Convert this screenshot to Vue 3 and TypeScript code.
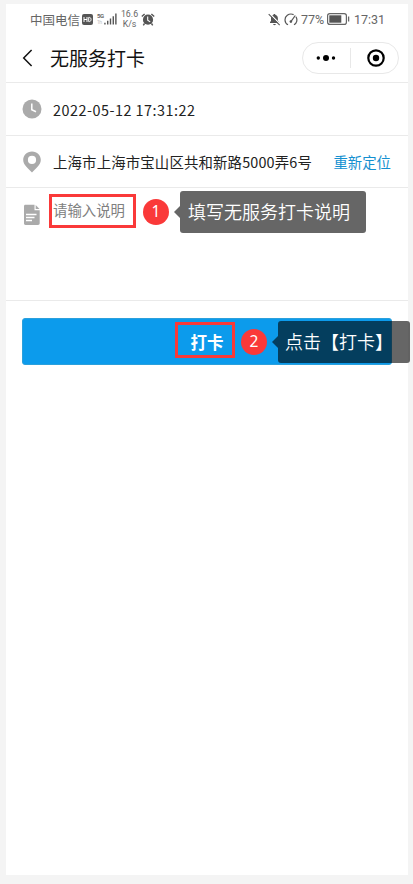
<script setup lang="ts">
interface Note {
  id: number
  text: string
}

const carrier = '中国电信'
const clock = '17:31'
const title = '无服务打卡'
const checkTime = '2022-05-12 17:31:22'
const address = '上海市上海市宝山区共和新路5000弄6号'
const notes: Note[] = [
  { id: 1, text: '填写无服务打卡说明' },
  { id: 2, text: '点击【打卡】' },
]
</script>

<template>
  <div class="page">
    <main class="phone">
      <div class="status">
        <span class="carrier">{{ carrier }}</span>
        <svg class="hd" width="11" height="11" viewBox="0 0 11 11">
          <rect width="11" height="11" rx="2" fill="#555" />
          <path d="M2 3v5M5 3v5M2 5.5h3M6.7 3.4v4.2h.7c2.2 0 2.2-4.2 0-4.2z" fill="none" stroke="#fff" stroke-width="1" />
        </svg>
        <span class="net"><b>5G</b><i>1h</i></span>
        <svg class="bars" width="13" height="12" viewBox="0 0 14 12">
          <path d="M1 10v2M4 8v4M7 5.500v6.500M10 3v9M12.800 0v12" stroke="#555" stroke-width="1.500" />
        </svg>
        <span class="speed"><span>16.6</span><span>K/s</span></span>
        <svg class="alarm" width="14" height="13" viewBox="0 0 14 13">
          <circle cx="7" cy="6.700" r="5.100" fill="#555" />
          <path d="M.8 3.600L3.600 1M13.200 3.600L10.400 1M3.500 10.500L2.300 12.300M10.500 10.500l1.200 1.800" stroke="#555" stroke-width="1.400" />
          <path d="M6.700 3.500v3.700l2.500 1.700" fill="none" stroke="#fff" stroke-width="1.100" />
        </svg>
        <div class="status-right">
          <svg width="13" height="13" viewBox="0 0 13 13">
            <path d="M2 10V9l1-1V5.500C3 3.300 4.200 2.200 5.600 1.800V1h1.600v.8C8.800 2.200 9.900 3.500 9.900 5.500V8l1.200 1v1z" fill="#555" />
            <path d="M5 11h3c-.4 1.500-2.600 1.500-3 0z" fill="#555" />
            <path d="M1.500.5l11 11" stroke="#fff" stroke-width="1.200" />
            <path d="M.7 1.200l11 11" stroke="#555" stroke-width="1.100" />
          </svg>
          <svg class="gauge" width="14" height="13" viewBox="0 0 14 13">
            <path d="M4 11.800C.2 9.800.1 4.600 3.300 2.300 5.300.8 7.600.7 9.600 1.600M12 3.700c1.700 3 .9 6.500-2 8.100" fill="none" stroke="#555" stroke-width="1.200" />
            <path d="M11.300 2.500L6.900 8.700" stroke="#555" stroke-width="1.200" />
            <circle cx="6.900" cy="8.600" r="1.300" fill="#555" />
          </svg>
          <span class="percent">77%</span>
          <svg class="battery" width="23" height="12" viewBox="0 0 23 12">
            <rect x=".6" y=".6" width="18.800" height="10.800" rx="2.200" fill="none" stroke="#666" stroke-width="1.200" />
            <rect x="2.300" y="2.300" width="12" height="7.400" fill="#555" />
            <path d="M21.600 3.500v5" stroke="#666" stroke-width="1.300" />
          </svg>
          <span class="clock">{{ clock }}</span>
        </div>
      </div>

      <header class="nav">
        <svg width="11" height="18" viewBox="0 0 11 18">
          <path d="M9.600 1L1.700 9l7.900 8" fill="none" stroke="#111" stroke-width="1.500" />
        </svg>
        <h1>{{ title }}</h1>
        <div class="capsule">
          <svg width="20" height="8" viewBox="0 0 20 8">
            <circle cx="2.300" cy="4" r="1.700" /><circle cx="10" cy="4" r="3" /><circle cx="17.500" cy="4" r="1.700" />
          </svg>
          <span class="divider"></span>
          <svg width="18" height="18" viewBox="0 0 18 18">
            <circle cx="9" cy="9" r="7.700" fill="none" stroke="#000" stroke-width="2.200" /><circle cx="9" cy="9" r="3.200" />
          </svg>
        </div>
      </header>

      <section class="row">
        <svg width="20" height="20" viewBox="0 0 20 20">
          <circle cx="10" cy="10" r="9.500" fill="#aaa" />
          <path d="M9.800 4.500v6.200l4.200 2" fill="none" stroke="#fff" stroke-width="1.500" />
        </svg>
        <span class="time">{{ checkTime }}</span>
      </section>

      <section class="row">
        <svg class="pin" width="20" height="22" viewBox="0 0 20 22">
          <path d="M10 .5C4.800.5 1.200 4.300 1.200 9c0 4.900 5 8.600 8.800 12.500C13.800 17.600 18.800 13.900 18.800 9 18.800 4.300 15.200.5 10 .5zm0 4.300a4.100 4.100 0 1 1 0 8.200 4.100 4.100 0 0 1 0-8.200z" fill="#aaa" fill-rule="evenodd" />
        </svg>
        <span class="address">{{ address }}</span>
        <a class="relocate">重新定位</a>
      </section>

      <section class="row memo">
        <svg width="20" height="22" viewBox="0 0 20 22">
          <path d="M3.500.8h9v5.500h5.200v13c0 1-.6 1.700-1.700 1.700H3.500C2.500 21 2 20.300 2 19.300v-17C2 1.300 2.500.8 3.500.8z" fill="#aaa" />
          <path d="M13.700 1l3.800 4h-3.800z" fill="#aaa" />
          <path d="M4 10.500h10.500M4 13.500h8.500M4 16.500h6" stroke="#fff" stroke-width="1.300" />
        </svg>
        <span class="placeholder">请输入说明</span>
      </section>

      <button class="submit" type="button">打卡</button>
    </main>

    <div class="frame frame-1"></div>
    <div class="frame frame-2"></div>
    <div v-for="note in notes" :key="note.id" class="note" :class="`note-${note.id}`">
      <span class="badge">{{ note.id }}</span>
      <span class="tip">{{ note.text }}</span>
    </div>
  </div>
</template>

<style>
body {
  background: #f4f4f4;
}
</style>

<style scoped>
.page {
  position: relative;
  box-sizing: border-box;
  width: 413px;
  height: 884px;
  padding: 4px 5px 9px 6px;
  overflow: hidden;
  background: #f4f4f4;
  font-family: 'Noto Sans', 'Noto Sans CJK SC', sans-serif;
  color: #222;
}
.phone {
  height: 871px;
  background: #fff;
}
svg {
  display: block;
  flex: none;
}
span, a, h1 {
  white-space: nowrap;
}
.status {
  display: flex;
  align-items: center;
  height: 30px;
  padding: 0 23px 0 24px;
  color: #666;
  font-size: 12.500px;
  font-family: Roboto, 'Noto Sans CJK SC', sans-serif;
}
.carrier {
  width: 52px;
}
.net {
  display: flex;
  flex-direction: column;
  width: 7px;
  margin-left: 4px;
  font-size: 6px;
  line-height: 6px;
  letter-spacing: -.5px;
}
.net i {
  color: #bbb;
  font-size: 5px;
  font-style: normal;
}
.speed {
  display: flex;
  flex-direction: column;
  align-items: center;
  width: 17px;
  margin-left: 4px;
  font-size: 8.800px;
  line-height: 10px;
}
.alarm {
  margin-left: 3px;
}
.status-right {
  display: flex;
  align-items: center;
  margin-left: auto;
}
.gauge {
  margin-left: 3px;
}
.percent {
  width: 26px;
  margin-left: 3px;
  font-size: 12.500px;
}
.clock {
  width: 31px;
  margin-left: 4px;
  font-size: 12.500px;
}
.nav {
  display: flex;
  align-items: center;
  box-sizing: border-box;
  height: 49px;
  padding: 0 9px 0 16px;
  border-bottom: 1px solid #eaeaea;
}
h1 {
  margin: 0 0 0 17px;
  padding-top: 1px;
  color: #111;
  font-size: 19px;
  font-weight: 400;
  line-height: 28px;
}
.capsule {
  display: flex;
  align-items: center;
  justify-content: space-between;
  box-sizing: border-box;
  width: 97px;
  height: 32px;
  margin-left: auto;
  padding: 0 13px;
  border: 1px solid #e8e8e8;
  border-radius: 16px;
}
.divider {
  width: 1px;
  height: 20px;
  margin-right: 2px;
  background: #e8e8e8;
}
.row {
  display: flex;
  align-items: center;
  box-sizing: border-box;
  height: 52px;
  padding: 0 17px 0 16px;
  border-bottom: 1px solid #eaeaea;
  font-size: 14.400px;
}
.row:nth-of-type(1) {
  height: 53px;
}
.time {
  margin-left: 11px;
  font-family: 'Noto Sans CJK SC', sans-serif;
  letter-spacing: .5px;
}
.address {
  margin-left: 11px;
  font-family: 'Noto Sans CJK SC', sans-serif;
  letter-spacing: .16px;
}
.relocate {
  margin-left: auto;
  color: #1490d0;
}
.memo {
  align-items: flex-start;
  height: 113px;
  padding-top: 16px;
}
.placeholder {
  margin: -4px 0 0 11px;
  color: #808080;
  line-height: 22px;
}
.submit {
  display: block;
  width: 370px;
  height: 47px;
  margin: 17px 0 0 16px;
  padding: 0;
  border: 1px solid #2ba0dc;
  border-radius: 3px;
  background: #0c9bec;
  color: #fff;
  font: 700 16.500px 'Noto Sans CJK SC', sans-serif;
}
.frame {
  position: absolute;
  box-sizing: border-box;
  border: 3px solid #fa3939;
}
.frame-1 {
  left: 49px;
  top: 194px;
  width: 87px;
  height: 34px;
}
.frame-2 {
  left: 175px;
  top: 322px;
  width: 60px;
  height: 36px;
}
.note {
  position: absolute;
  display: flex;
  align-items: center;
}
.note-1 {
  left: 143px;
  top: 191px;
}
.note-2 {
  left: 241px;
  top: 321px;
}
.badge {
  width: 26px;
  height: 26px;
  border-radius: 50%;
  background: #fa3939;
  color: #fff;
  font-size: 15.500px;
  line-height: 24px;
  text-align: center;
}
.tip {
  position: relative;
  box-sizing: border-box;
  width: 186px;
  height: 42px;
  margin-left: 11px;
  padding-left: 8px;
  border-radius: 3px;
  background: rgba(0, 0, 0, .6);
  color: #fff;
  font-size: 18px;
  font-weight: 350;
  line-height: 42px;
}
.note-2 .tip {
  width: 132px;
  padding-left: 7px;
}
.tip::before {
  position: absolute;
  top: 15px;
  left: -6px;
  border: solid transparent;
  border-width: 6px 6px 6px 0;
  border-right-color: rgba(0, 0, 0, .6);
  content: '';
}
</style>
